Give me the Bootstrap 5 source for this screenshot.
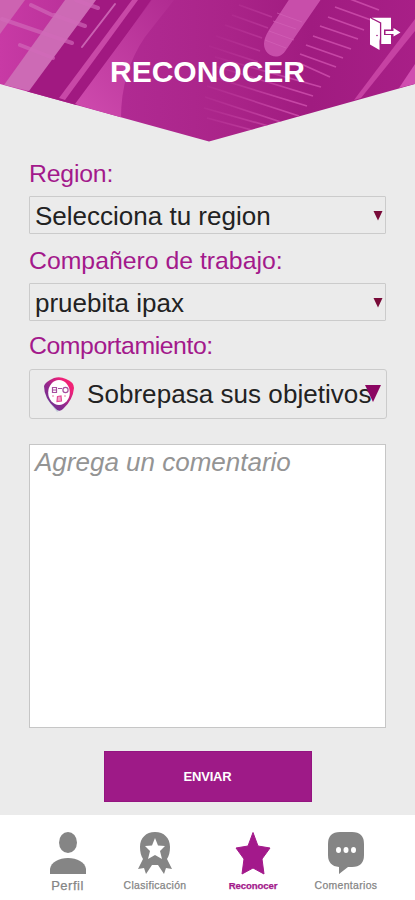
<!DOCTYPE html>
<html lang="es">
<head>
<meta charset="utf-8">
<meta name="viewport" content="width=device-width, initial-scale=1">
<title>Reconocer</title>
<link href="https://cdn.jsdelivr.net/npm/bootstrap@5.3.0/dist/css/bootstrap.min.css" rel="stylesheet">
<style>
body{font-family:"Liberation Sans",Arial,sans-serif;background:#ebebeb;color:#222}
.screen{height:900px;overflow:hidden}
.hero{height:142px}
.hero-art{inset:0}
.hero h1{font-size:30px;line-height:36px;padding-top:54px}
.exit-btn{left:370px;top:17px;line-height:0}
.form-area{padding:17px 29px 0}
.field-label{font-size:24.8px;line-height:30px;color:#a3198b;margin:0;display:block;white-space:nowrap}
.label-region{letter-spacing:-.2px;margin-bottom:7px}
.label-mate{margin:12px 0 7px}
.label-behavior{letter-spacing:-.43px;margin:10px 0 8px}
.picker{height:38px;border:1px solid #cbcbcb;border-radius:1px;padding:0 2px 0 5px;font-size:26px;line-height:36px;white-space:nowrap;background:#ebebeb;color:#222}
.picker-text{padding-top:2px}
.picker-tall{height:50px;border-radius:3px;margin-right:-1px;padding:0 0 0 14px}
.tall-text{padding-left:11px;letter-spacing:.05px}
.tall-arrow{right:5px;top:15px}
.comment{height:284px;margin-top:25px;border:1px solid #c6c6c6;border-radius:0;resize:none;padding:1px 5px;font-size:26px;line-height:32px;font-style:italic;display:block}
.comment::placeholder{color:#949494;opacity:1}
.send-row{padding-top:23px}
.send{width:208px;height:51px;background:#9e1a87;border:1px solid #941480;border-radius:0;font-size:13px;letter-spacing:-.2px;color:#fff}
.tabs{height:85px;padding:17px 0 0 22px;background:#fff;color:#858585}
.tabs a{color:inherit;line-height:12px;font-size:10.4px;letter-spacing:.35px;white-space:nowrap}
.tabs svg{height:44px}
.tabs a.current{color:#a3198b}
.t1{width:91px}.t2{width:84px}.t3{width:112px}.t4{width:74px}
.tabs .t1{font-size:13px;letter-spacing:.5px}
.tabs .t3{font-size:9.6px;letter-spacing:-.1px}
.tabs span{padding-top:4px;-webkit-text-stroke:.25px currentColor}
</style>
<script src="https://cdn.jsdelivr.net/npm/bootstrap@5.3.0/dist/js/bootstrap.bundle.min.js"></script>
</head>
<body>
<div class="screen d-flex flex-column">
  <header class="hero position-relative flex-shrink-0">
    <svg class="hero-art position-absolute" width="415" height="142" viewBox="0 0 415 142" aria-hidden="true">
      <defs>
        <clipPath id="banner"><path d="M0 0H415V84L209 141.500L0 84Z"/></clipPath>
        <linearGradient id="base" x1="0" x2="1"><stop offset="0" stop-color="#c83aa5"/><stop offset=".3" stop-color="#b02a92"/><stop offset=".55" stop-color="#aa2489"/><stop offset=".75" stop-color="#a01b80"/><stop offset="1" stop-color="#a81f87"/></linearGradient>
        <linearGradient id="fadeRib" x1="0" y1="1" x2="1" y2="0"><stop offset="0" stop-color="#d04caf"/><stop offset="1" stop-color="#b02b91"/></linearGradient>
        <linearGradient id="dash" gradientUnits="userSpaceOnUse" x1="205" y1="75" x2="330" y2="110"><stop offset="0" stop-color="#c747a7" stop-opacity="0.1"/><stop offset=".7" stop-color="#cf50ae" stop-opacity=".8"/></linearGradient>
      </defs>
      <g clip-path="url(#banner)">
        <rect width="415" height="142" fill="url(#base)"/>
        <path d="M0 0H25L0 34Z" fill="#cd63b1"/>
        <path d="M96 0H151L76 106L27 92Z" fill="#a11981"/>
        <path d="M65 0H96L29 91L4 85Z" fill="#cd6ab5"/>
        <g stroke="#d26bba" stroke-width="4" stroke-linecap="round" opacity=".65">
          <path d="M76 0L98 8M31 5L52 15M54 15L85 26M2 19L72 43M20 45L53 58"/>
        </g>
        <path d="M115 4L82 47" stroke="#ca61b2" stroke-width="2" stroke-linecap="round"/>
        <path d="M132 0H138L65 100L59 98Z" fill="#c848a7"/>
        <path d="M152 0H174L145 37Q121 72 121 118L75 104Z" fill="url(#fadeRib)"/>
        <g stroke="url(#dash)" stroke-width="1.700">
          <path d="M350 -1L379 10M335 7L371 20M328 17L364 30M320 26L358 39M313 36L351 49M306 45L343 58M300 54L336 67M239 5L272 17M232 15L268 28M225 25L262 38M216 36L260 51M209 46L258 62M299 63L330 77M215 57L321 87M215 66L313 96M209 76L307 106M207 86L299 116M205 97L290 125M204 108L272 127M207 118L263 133"/>
        </g>
        <path d="M292 -5H324L286 50C279 62 264 56 264 44Q264 38 269 30Z" fill="#cb52ae" opacity=".92"/>
        <path d="M277 13L302 22M273 21L296 29M269 31L294 40M265 40L286 48" stroke="#d665ba" opacity=".6"/>
        <path d="M415 19V31L361 98L354 100Z" fill="#c642a3"/>
        <path d="M415 64V84L399 88Z" fill="#d04eb0"/>
      </g>
    </svg>
    <h1 class="position-relative text-white text-center fw-bold m-0">RECONOCER</h1>
    <a class="exit-btn position-absolute" href="#" aria-label="Salir">
      <svg width="32" height="34" viewBox="0 0 32 34"><path d="M2 .8H21V27H11Z" fill="#fff"/><path d="M0 1L9.500 6.500V33L0 27.500Z" fill="#fff"/><path d="M2 1.500L10.600 6V28" fill="none" stroke="#a01b80" stroke-width="1.300"/><path d="M14 12.500H23V9L31 15.500L23 21V18H14Z" fill="#a01b80"/><path d="M15.500 14H23.500V11L30.500 15.500L23.500 19.500V17H15.500Z" fill="#fff"/><circle cx="7" cy="18.500" r=".8" fill="#a01b80"/></svg>
    </a>
  </header>

  <main class="form-area flex-grow-1">
    <label class="field-label label-region">Region:</label>
    <div class="picker d-flex align-items-center justify-content-between"><span class="picker-text">Selecciona tu region</span>
      <svg width="10" height="11" viewBox="0 0 10 11"><path d="M.5 1H9.500L5 10.500Z" fill="#780a38"/></svg></div>
    <label class="field-label label-mate">Compañero de trabajo:</label>
    <div class="picker d-flex align-items-center justify-content-between"><span class="picker-text">pruebita ipax</span>
      <svg width="10" height="11" viewBox="0 0 10 11"><path d="M.5 1H9.500L5 10.500Z" fill="#780a38"/></svg></div>
    <label class="field-label label-behavior">Comportamiento:</label>
    <div class="picker picker-tall position-relative d-flex align-items-center">
      <svg class="flex-shrink-0" width="32" height="36" viewBox="0 0 32 36" aria-hidden="true">
        <defs><linearGradient id="mask" x1="0" y1="1" x2="1" y2="0"><stop offset="0" stop-color="#5b3694"/><stop offset=".45" stop-color="#96288d"/><stop offset=".75" stop-color="#ee1f78"/><stop offset="1" stop-color="#f22a70"/></linearGradient></defs>
        <path d="M3 23L13 36L18 33Z" fill="#c3cedb"/>
        <path d="M0 10Q1 6 10 2Q16 0 22 3Q30 6 30 12Q29 24 19 33Q15 37 11 32Q0 22 0 10Z" fill="url(#mask)"/>
        <ellipse cx="15" cy="16.500" rx="10.800" ry="12.500" fill="#fff"/>
        <g fill="none" stroke="#a74fa0" stroke-width="1.200"><path d="M8.500 11.500H12.500V16.500H8.500ZM8.500 14H12.500M14 12.500H18"/><circle cx="21.500" cy="14" r="2.600"/><path d="M8 20H10M20 20H22" stroke="#ee79ad"/><path d="M13.500 20.500L17 20L17.500 25L13 25.500Z" stroke="#e34896" fill="#f4a3cb"/></g>
      </svg>
      <span class="tall-text">Sobrepasa sus objetivos</span>
      <svg class="tall-arrow position-absolute" width="16" height="18" viewBox="0 0 16 18"><path d="M0 0H16L8 17Z" fill="#8b0562"/></svg>
    </div>
    <textarea class="comment form-control" placeholder="Agrega un comentario" aria-label="Comentario"></textarea>
    <div class="send-row d-flex justify-content-center"><button class="send btn fw-bold p-0">ENVIAR</button></div>
  </main>

  <nav class="tabs d-flex flex-shrink-0 text-center">
    <a href="#" class="t1 text-decoration-none d-flex flex-column align-items-center"><svg width="36" height="44" viewBox="0 0 36 44" fill="currentColor"><ellipse cx="18" cy="10.500" rx="9" ry="10.500"/><path d="M0 42V37C1 30 9 26 18 26S35 30 36 37V42Z"/></svg><span>Perfil</span></a>
    <a href="#" class="t2 text-decoration-none d-flex flex-column align-items-center"><svg width="36" height="44" viewBox="0 0 36 44" fill="currentColor"><path fill-rule="evenodd" d="M18 0C27 0 33 6 33 15C33 20 32 24 30 27L35 37L29 36L27 42L21 33H15L9 42L7 36L1 37L6 27C4 24 3 20 3 15C3 6 9 0 18 0ZM18 6L15 13.500L8 14L13 19L11 27L18 23L25 27L23 19L28 14L21 13.500Z"/></svg><span>Clasificación</span></a>
    <a href="#" class="t3 current text-decoration-none d-flex flex-column align-items-center"><svg width="36" height="44" viewBox="0 0 36 44" fill="currentColor" stroke="currentColor" stroke-linejoin="round"><path d="M18 .5L23 14L35 16L27 27L29 42L18 36L7 42L9 27L1 16L13 14Z"/></svg><span class="fw-bold">Reconocer</span></a>
    <a href="#" class="t4 text-decoration-none d-flex flex-column align-items-center"><svg width="36" height="44" viewBox="0 0 36 44"><path d="M12 0H24Q36 0 36 12V23Q36 35 24 35H20L11 42V35Q0 34 0 23V12Q0 0 12 0Z" fill="currentColor"/><g fill="#fff"><ellipse cx="10.500" cy="18" rx="2.500" ry="3"/><ellipse cx="18" cy="18" rx="2.500" ry="3"/><ellipse cx="25.500" cy="18" rx="2.500" ry="3"/></g></svg><span>Comentarios</span></a>
  </nav>
</div>
</body>
</html>
